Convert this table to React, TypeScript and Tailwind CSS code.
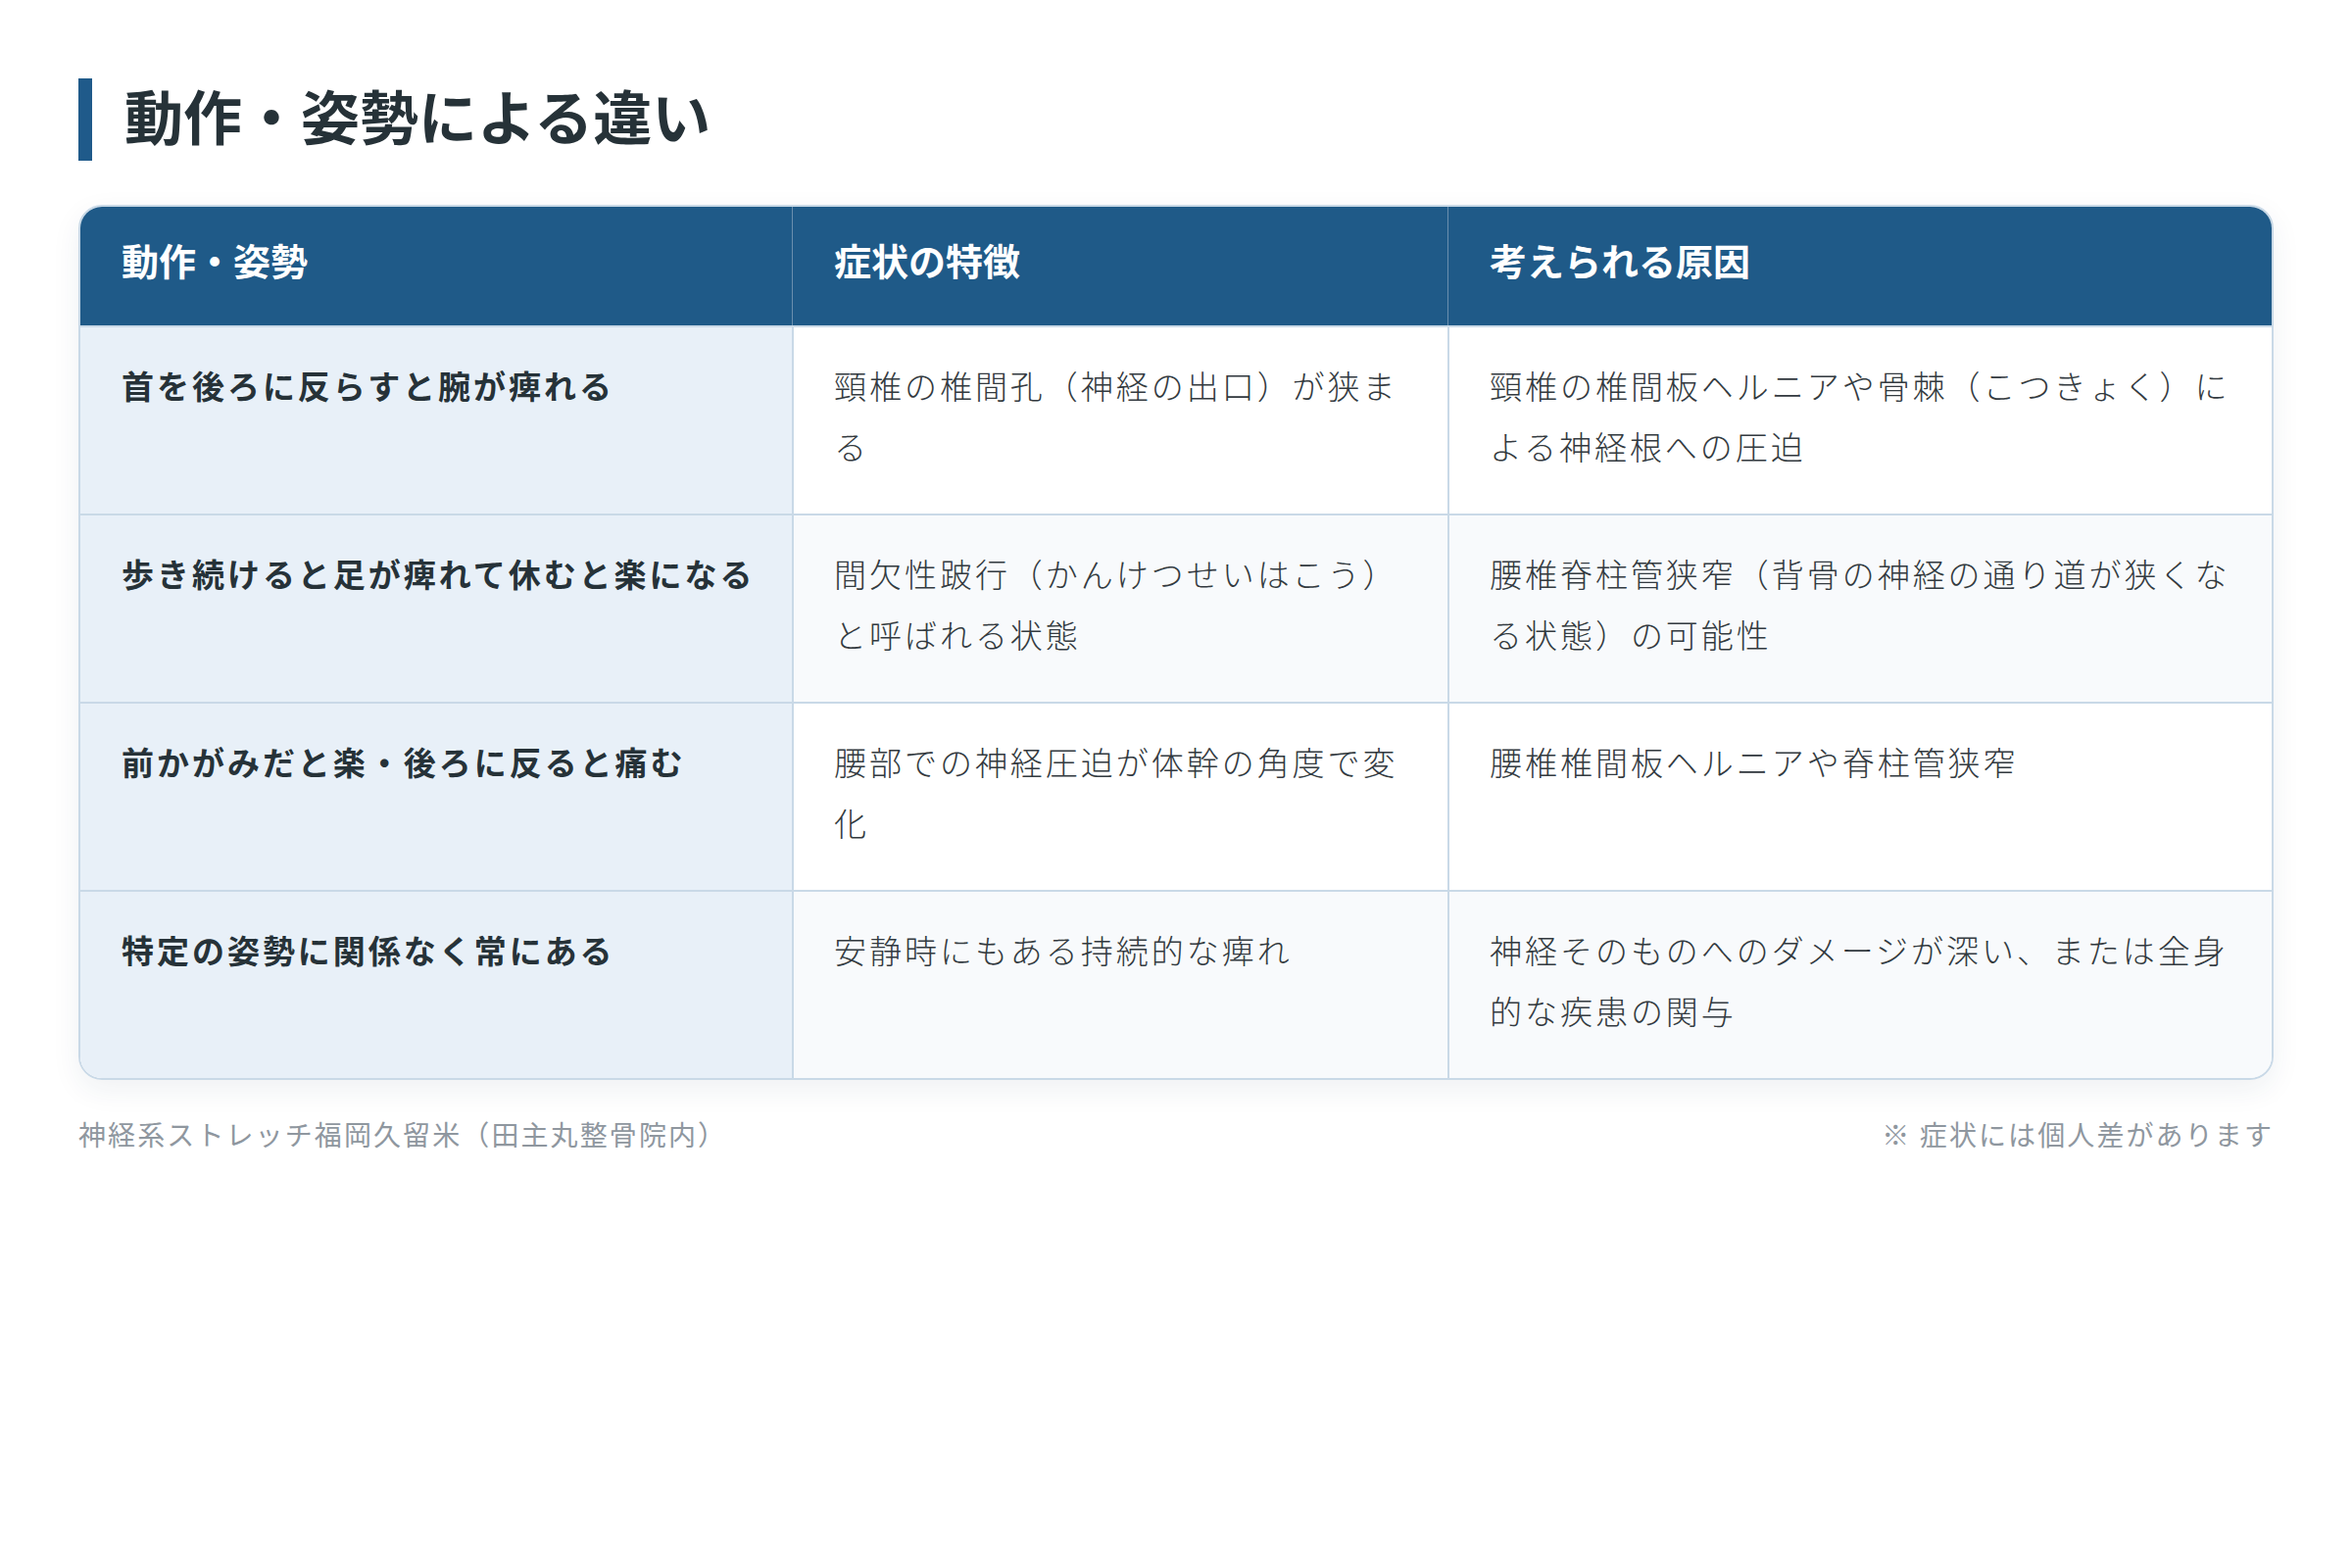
const rows = [
  {
    posture: '首を後ろに反らすと腕が痺れる',
    symptom: '頸椎の椎間孔（神経の出口）が狭まる',
    cause: '頸椎の椎間板ヘルニアや骨棘（こつきょく）による神経根への圧迫',
  },
  {
    posture: '歩き続けると足が痺れて休むと楽になる',
    symptom: '間欠性跛行（かんけつせいはこう）と呼ばれる状態',
    cause: '腰椎脊柱管狭窄（背骨の神経の通り道が狭くなる状態）の可能性',
  },
  {
    posture: '前かがみだと楽・後ろに反ると痛む',
    symptom: '腰部での神経圧迫が体幹の角度で変化',
    cause: '腰椎椎間板ヘルニアや脊柱管狭窄',
  },
  {
    posture: '特定の姿勢に関係なく常にある',
    symptom: '安静時にもある持続的な痺れ',
    cause: '神経そのものへのダメージが深い、または全身的な疾患の関与',
  },
];

const font = { fontFamily: '"Noto Sans CJK JP", "Noto Sans", sans-serif' };

export default function App() {
  return (
    <div className="min-h-screen bg-white px-[80px] pt-[80px]" style={font}>
      <h2 className="flex h-[84px] items-center border-l-[14px] border-[#1f5a8a] pb-[10px] pl-[33px] text-[60px] font-bold leading-none text-[#263238]">
        動作・姿勢による違い
      </h2>

      <div className="mt-[45px] overflow-hidden rounded-[24px] border-2 border-[#c9d9e7] shadow-[0_10px_30px_rgba(30,60,90,0.07)]">
        <div className="grid grid-cols-[726px_669px_1fr] bg-[#1f5a88] text-[38px] font-bold leading-[57px] text-white">
          <div className="px-[42px] pb-[39px] pt-[25px]">動作・姿勢</div>
          <div className="border-l border-[#6a8fae] px-[42px] pb-[39px] pt-[25px]">症状の特徴</div>
          <div className="border-l border-[#6a8fae] px-[42px] pb-[39px] pt-[25px]">考えられる原因</div>
        </div>

        {rows.map((row, i) => (
          <div
            key={i}
            className={`grid grid-cols-[726px_669px_1fr] border-t-2 border-[#c9d9e7] text-[33px] leading-[62px] tracking-[0.09em] ${
              i % 2 === 1 ? 'bg-[#f8fafc]' : 'bg-white'
            }`}
          >
            <div className="bg-[#e8f0f8] pb-[38px] pl-[42px] pr-[16px] pt-[28px] font-bold text-[#263238]">
              {row.posture}
            </div>
            <div className="border-l-2 border-[#c9d9e7] pb-[38px] pl-[41px] pr-[34px] pt-[28px] font-light text-[#333a40]">
              {row.symptom}
            </div>
            <div className="border-l-2 border-[#c9d9e7] pb-[38px] pl-[41px] pr-[34px] pt-[28px] font-light text-[#333a40]">
              {row.cause}
            </div>
          </div>
        ))}
      </div>

      <div className="mt-[34px] flex justify-between text-[28px] leading-[42px] tracking-[0.075em] text-[#8f979f]">
        <span>神経系ストレッチ福岡久留米（田主丸整骨院内）</span>
        <span>※ 症状には個人差があります</span>
      </div>
    </div>
  );
}
